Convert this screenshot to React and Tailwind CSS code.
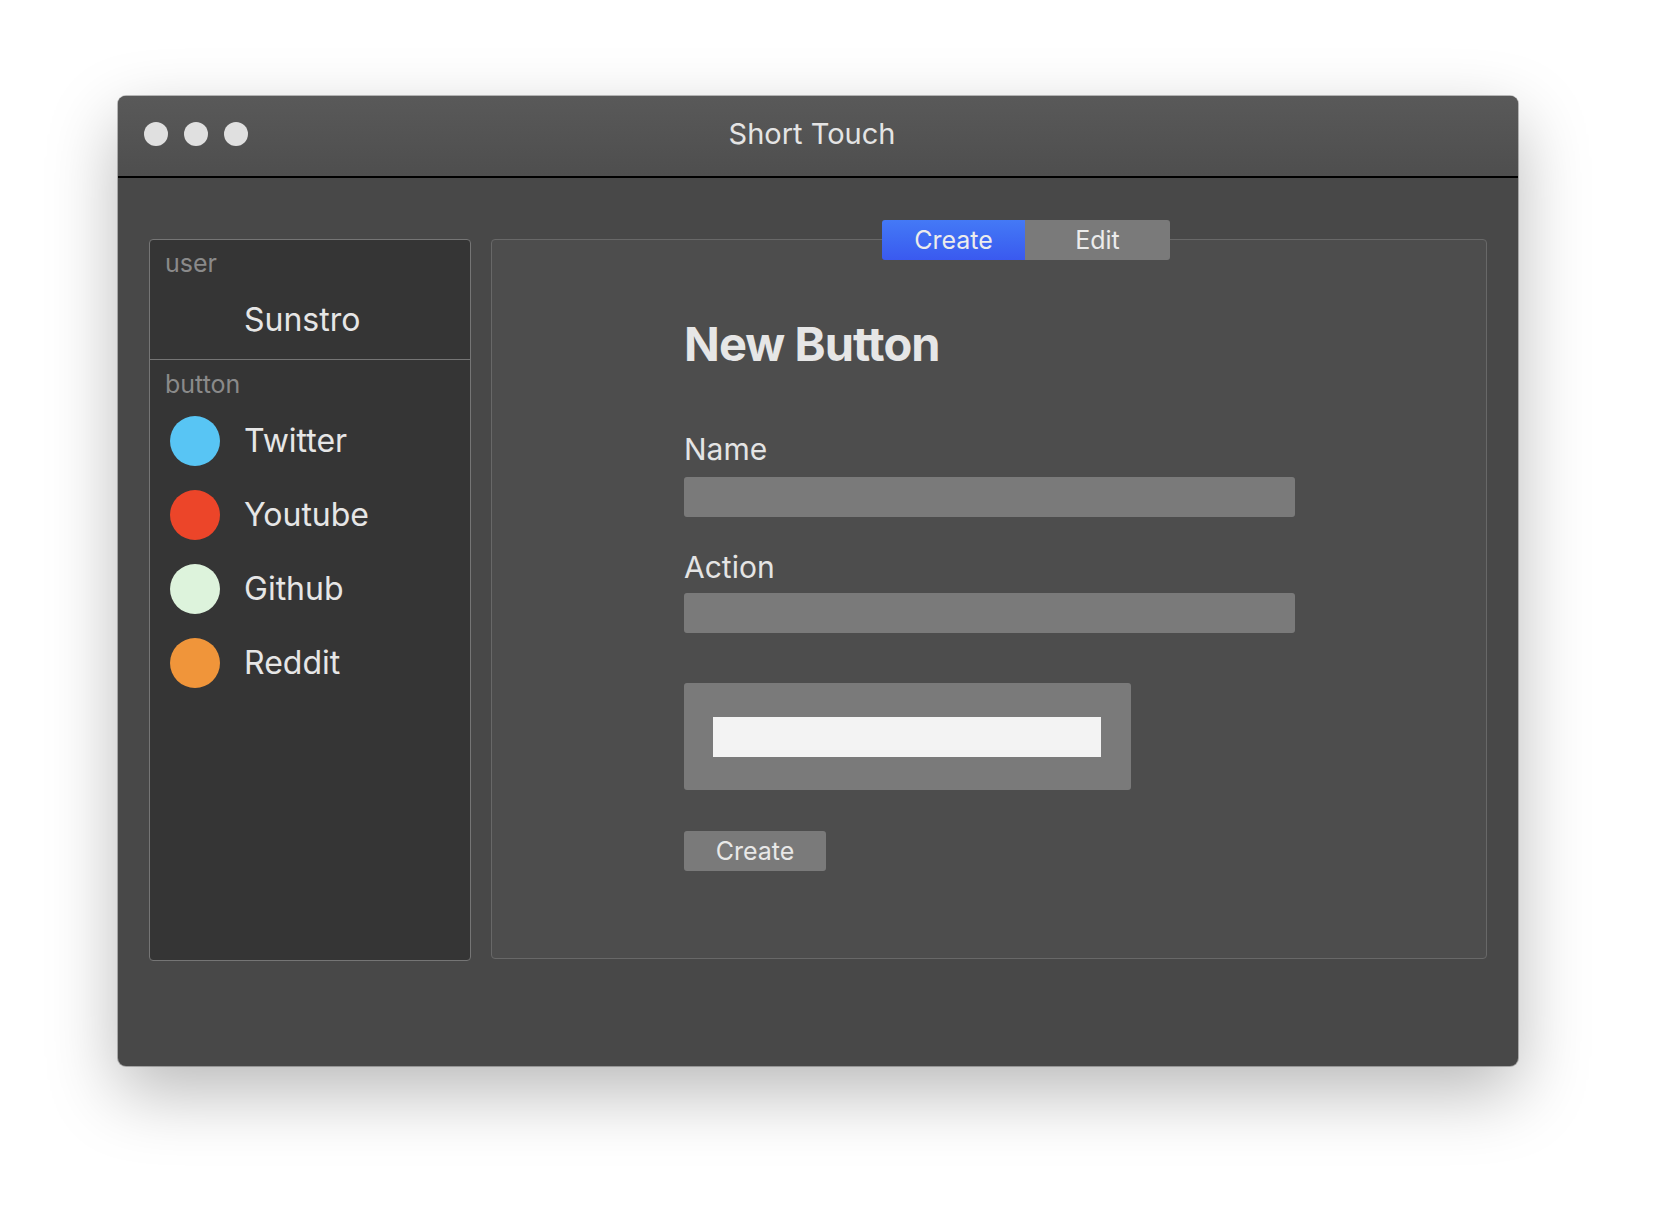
import React from 'react';

const buttons = [
    { name: 'Twitter', color: 'bg-[#58c5f4]' },
    { name: 'Youtube', color: 'bg-[#ec4529]' },
    { name: 'Github', color: 'bg-[#ddf3dc]' },
    { name: 'Reddit', color: 'bg-[#f0953a]' },
];

function TitleBar() {
    return (
        <div className="grid grid-cols-[1fr_auto_1fr] items-center h-[82px] pb-[5px] px-[26px] bg-gradient-to-b from-[#595959] to-[#4e4e4e] border-b-2 border-black rounded-t-[8px]">
            <div className="flex gap-[16px]">
                <span className="w-[24px] h-[24px] rounded-full bg-[#e0e0e0]" />
                <span className="w-[24px] h-[24px] rounded-full bg-[#e0e0e0]" />
                <span className="w-[24px] h-[24px] rounded-full bg-[#e0e0e0]" />
            </div>
            <div className="text-[29px] leading-[29px] text-[#e4e4e4] pr-[12px]">Short Touch</div>
            <div />
        </div>
    );
}

function Sidebar() {
    return (
        <div className="w-[322px] h-[722px] shrink-0 bg-[#353535] border border-[#757575] rounded-[4px]">
            <div className="border-b border-[#757575] pt-[11px] pb-[23px]">
                <div className="pl-[15px] text-[25px] leading-[25px] text-[#8a8a8a]">user</div>
                <div className="pl-[94px] mt-[28px] text-[32px] leading-[32px] text-[#e6e6e6]">Sunstro</div>
            </div>
            <div className="pt-[12px]">
                <div className="pl-[15px] text-[25px] leading-[25px] text-[#8a8a8a]">button</div>
                <div className="flex flex-col gap-[24px] mt-[19px] pl-[20px]">
                    {buttons.map((b) => (
                        <div key={b.name} className="flex items-center h-[50px] gap-[24px]">
                            <span className={`w-[50px] h-[50px] rounded-full ${b.color}`} />
                            <span className="text-[32px] leading-[32px] text-[#e6e6e6]">{b.name}</span>
                        </div>
                    ))}
                </div>
            </div>
        </div>
    );
}

function MainPanel() {
    return (
        <div className="relative flex-1 h-[720px] bg-[#4d4d4d] border border-[#686868] rounded-[4px]">
            <div className="absolute left-[390px] top-[-20px] flex h-[40px] text-[25px] leading-[25px] text-[#ececec]">
                <div className="w-[143px] flex items-center justify-center rounded-l-[3px] bg-gradient-to-b from-[#4479f6] to-[#3a59ef]">Create</div>
                <div className="w-[145px] flex items-center justify-center rounded-r-[3px] bg-[#7a7a7a]">Edit</div>
            </div>

            <div className="pl-[192px] pt-[80px]">
                <h1 className="text-[47px] leading-[48px] font-bold tracking-[-0.02em] text-[#e6e6e6]">New Button</h1>

                <div className="mt-[66px] text-[30px] leading-[30px] text-[#e4e4e4]">Name</div>
                <div className="mt-[13px] w-[611px] h-[40px] rounded-[3px] bg-[#7a7a7a]" />

                <div className="mt-[35px] text-[30px] leading-[30px] text-[#e4e4e4]">Action</div>
                <div className="mt-[11px] w-[611px] h-[40px] rounded-[3px] bg-[#7a7a7a]" />

                <div className="mt-[50px] w-[447px] h-[107px] rounded-[3px] bg-[#7a7a7a] pt-[34px] pl-[29px]">
                    <div className="w-[388px] h-[40px] bg-[#f3f3f3]" />
                </div>

                <button className="mt-[41px] w-[142px] h-[40px] flex items-center justify-center rounded-[3px] bg-[#7a7a7a] text-[25px] leading-[25px] text-[#e8e8e8]">
                    Create
                </button>
            </div>
        </div>
    );
}

export default function App() {
    return (
        <div className="w-[1676px] h-[1232px] bg-white pt-[96px] pl-[118px] font-['Inter',sans-serif]">
            <div className="w-[1400px] h-[970px] rounded-[8px] bg-[#484848] shadow-[0_0_0_1px_rgba(0,0,0,0.25),0_26px_70px_rgba(0,0,0,0.28)]">
                <TitleBar />
                <div className="flex gap-[20px] pt-[61px] px-[31px]">
                    <Sidebar />
                    <MainPanel />
                </div>
            </div>
        </div>
    );
}
